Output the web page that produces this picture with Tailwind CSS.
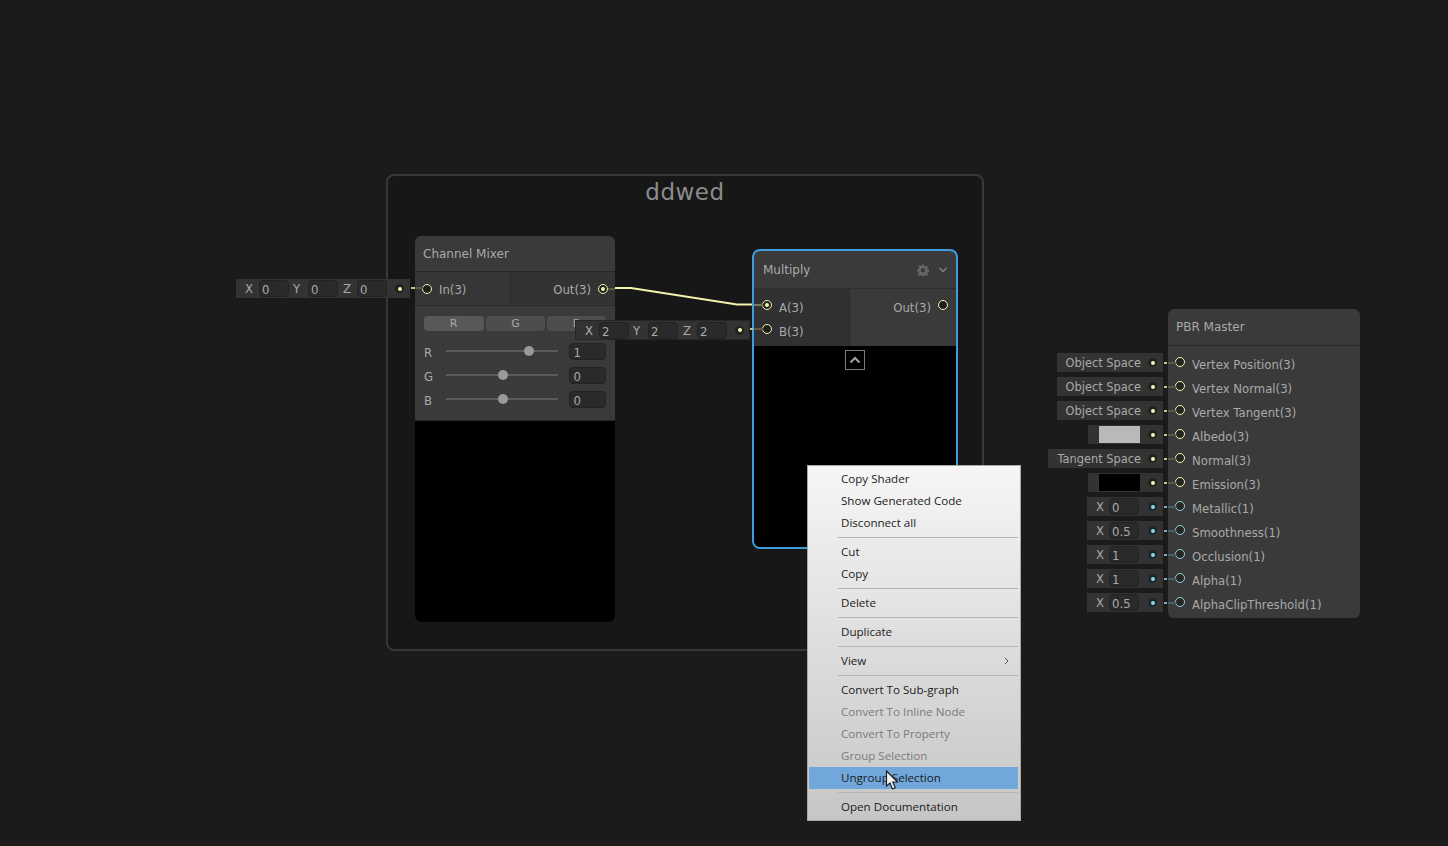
<!DOCTYPE html>
<html lang="en">
<head>
    <meta charset="UTF-8">
    <title>Shader Graph</title>
    <script src="https://cdn.jsdelivr.net/npm/@tailwindcss/browser@4"></script>
</head>
<body class="bg-[#1b1b1b] overflow-hidden">
<div class="relative w-[1448px] h-[846px] overflow-hidden font-['DejaVu_Sans',sans-serif] text-[11.7px] text-[#a9a9a9]">

    <!-- Group -->
    <div class="absolute left-[386px] top-[174px] w-[598px] h-[477px] rounded-lg border-2 border-[#383838] bg-[#171717] text-center text-[23px] leading-[32px] text-[#8c8c8c] tracking-[0.5px]">ddwed</div>

    <!-- Wire -->
    <svg class="absolute left-0 top-0" width="1448" height="846" fill="none">
        <path d="M612 288 H631 L737 304.500 H754" stroke="#f3f3ad" stroke-width="2"/>
    </svg>

    <!-- Channel Mixer -->
    <div class="absolute left-[415px] top-[236px] w-[200px] h-[386px] rounded-md bg-[#3a3a3a] flex flex-col overflow-hidden">
        <div class="h-[36px] shrink-0 flex items-center pl-2 text-[12px] border-b border-[#262626]">Channel Mixer</div>
        <div class="h-[34px] shrink-0 flex border-b border-[#2a2a2a]">
            <div class="w-[96px] flex items-center pl-[7px] gap-[7px] bg-[#363636] border-r border-[#2a2a2a]">
                <span class="w-2.5 h-2.5 rounded-full border-[1.5px] border-[#f3f3b8] bg-[#20201a]"></span>
                <span class="pt-[4px]">In(3)</span>
            </div>
            <div class="relative flex-1 flex items-center justify-end pr-[7px] gap-[7px] bg-[#333333]">
                <span class="pt-[4px]">Out(3)</span>
                <span class="w-2.5 h-2.5 rounded-full border-[1.5px] border-[#f3f3b8] bg-[#20201a] flex items-center justify-center"><span class="w-1 h-1 rounded-full bg-[#f3f3b8]"></span></span>
                <span class="absolute right-0 top-[16px] w-[7px] h-[2px] bg-[#5c5c48]"></span>
            </div>
        </div>
        <div class="h-[115px] shrink-0 pt-[10px] px-[9px] border-b border-[#2a2a2a]">
            <div class="flex gap-[2px] mb-[8px] w-[182px]">
                <div class="flex-1 h-[15px] rounded-sm bg-[#585858] text-center leading-[15px] text-[11px] pr-px">R</div>
                <div class="flex-1 h-[15px] rounded-sm bg-[#4d4d4d] text-center leading-[15px] text-[11px]">G</div>
                <div class="flex-1 h-[15px] rounded-sm bg-[#4d4d4d] text-center leading-[15px] text-[11px]">B</div>
            </div>
            <div class="flex items-center h-6">
                <span class="w-[22px] pt-[5px]">R</span>
                <div class="relative w-[114px] h-[2px] bg-[#5c5c5c]"><span class="absolute left-[78px] -top-[4px] w-2.5 h-2.5 rounded-full bg-[#9a9a9a]"></span></div>
                <div class="ml-[11px] mt-px w-[37px] h-[17px] rounded-sm bg-[#2a2a2a] border border-[#222222] pl-[3px] pt-[2px] leading-[15px]">1</div>
            </div>
            <div class="flex items-center h-6">
                <span class="w-[22px] pt-[5px]">G</span>
                <div class="relative w-[114px] h-[2px] bg-[#5c5c5c]"><span class="absolute left-[52px] -top-[4px] w-2.5 h-2.5 rounded-full bg-[#9a9a9a]"></span></div>
                <div class="ml-[11px] mt-px w-[37px] h-[17px] rounded-sm bg-[#2a2a2a] border border-[#222222] pl-[3px] pt-[2px] leading-[15px]">0</div>
            </div>
            <div class="flex items-center h-6">
                <span class="w-[22px] pt-[5px]">B</span>
                <div class="relative w-[114px] h-[2px] bg-[#5c5c5c]"><span class="absolute left-[52px] -top-[4px] w-2.5 h-2.5 rounded-full bg-[#9a9a9a]"></span></div>
                <div class="ml-[11px] mt-px w-[37px] h-[17px] rounded-sm bg-[#2a2a2a] border border-[#222222] pl-[3px] pt-[2px] leading-[15px]">0</div>
            </div>
        </div>
        <div class="flex-1 bg-black"></div>
    </div>

    <!-- In(3) default value -->
    <div class="absolute left-[236px] top-[279px] w-[174px] h-[19px] bg-[#333333] flex items-center pl-[9px]">
        <span class="w-[14px] pt-[3px]">X</span><span class="w-[30px] h-[17px] rounded-sm bg-[#2a2a2a] border border-[#222222] pl-[2px] pt-[2px] leading-[15px]">0</span>
        <span class="w-[19px] pl-[4px] pt-[3px]">Y</span><span class="w-[30px] h-[17px] rounded-sm bg-[#2a2a2a] border border-[#222222] pl-[2px] pt-[2px] leading-[15px]">0</span>
        <span class="w-[19px] pl-[5px] pt-[3px]">Z</span><span class="w-[30px] h-[17px] rounded-sm bg-[#2a2a2a] border border-[#222222] pl-[2px] pt-[2px] leading-[15px]">0</span>
        <span class="ml-[8px] w-[9px] h-[9px] rounded-full bg-[#22221a] flex items-center justify-center"><span class="w-1 h-1 rounded-full bg-[#f3f3b8]"></span></span>
    </div>
    <div class="absolute left-[411px] top-[287px] w-[4px] h-[2px] bg-[#c4c48c]"></div>
    <div class="absolute left-[416px] top-[287px] w-[7px] h-[2px] bg-[#5c5c48]"></div>

    <!-- Multiply -->
    <div class="absolute left-[752px] top-[249px] w-[206px] h-[300px] rounded-lg border-2 border-[#3d9ddd] bg-[#3a3a3a] flex flex-col overflow-hidden">
        <div class="h-[38px] shrink-0 flex items-center pl-[9px] pr-[9px] text-[12px] border-b border-[#2e2e2e]">
            <span class="flex-1">Multiply</span>
            <svg width="12" height="12" viewBox="0 0 24 24" fill="#666666" class="mr-[9px]"><path fill-rule="evenodd" d="M10 1h4l.7 3.300 2 .8L19.500 3.300l2.800 2.800-1.800 2.800.8 2 3.200.7v4l-3.200.7-.8 2 1.800 2.800-2.800 2.800-2.800-1.800-2 .8-.7 3.200h-4l-.7-3.200-2-.8-2.800 1.800-2.800-2.800 1.800-2.800-.8-2L.5 14.500v-4l3.200-.7.8-2-1.800-2.800 2.800-2.800 2.800 1.800 2-.8zM12 8a4.500 4.500 0 1 0 0 9 4.500 4.500 0 0 0 0-9z"/></svg>
            <svg width="10" height="8" viewBox="0 0 10 8" fill="none" stroke="#808080" stroke-width="1.500" class="mr-[-1px]"><path d="M1.500 2 5 5.500 8.500 2"/></svg>
        </div>
        <div class="h-[57px] shrink-0 flex">
            <div class="w-[96px] bg-[#313131] border-r border-[#2a2a2a] pt-[4px] pl-[8px]">
                <div class="h-6 flex items-center gap-[7px]">
                    <span class="w-2.5 h-2.5 rounded-full border-[1.5px] border-[#f3f3b8] bg-[#20201a] flex items-center justify-center"><span class="w-1 h-1 rounded-full bg-[#f3f3b8]"></span></span>
                    <span class="pt-[7px]">A(3)</span>
                </div>
                <div class="h-6 flex items-center gap-[7px]">
                    <span class="w-2.5 h-2.5 rounded-full border-[1.5px] border-[#f3f3b8] bg-[#20201a]"></span>
                    <span class="pt-[7px]">B(3)</span>
                </div>
            </div>
            <div class="flex-1 pt-[4px] pr-2">
                <div class="h-6 flex items-center justify-end gap-[7px]">
                    <span class="pt-[7px]">Out(3)</span>
                    <span class="w-2.5 h-2.5 rounded-full border-[1.5px] border-[#f3f3b8] bg-[#20201a]"></span>
                </div>
            </div>
        </div>
        <div class="flex-1 bg-black flex justify-center pt-[4px]">
            <div class="w-5 h-5 border border-[#7a7a7a] flex items-center justify-center">
                <svg width="12" height="8" viewBox="0 0 12 8" fill="none" stroke="#a0a0a0" stroke-width="2"><path d="M1.500 6.500 6 2l4.500 4.500"/></svg>
            </div>
        </div>
    </div>

    <!-- B(3) default value, drawn over the mixer -->
    <div class="absolute left-[575px] top-[320px] w-[175px] h-[20px] bg-[#333333] border border-[#262626] flex items-center pl-[9px]">
        <span class="w-[14px] pt-[3px]">X</span><span class="w-[30px] h-[17px] rounded-sm bg-[#2a2a2a] border border-[#222222] pl-[2px] pt-[2px] leading-[15px]">2</span>
        <span class="w-[19px] pl-[4px] pt-[3px]">Y</span><span class="w-[30px] h-[17px] rounded-sm bg-[#2a2a2a] border border-[#222222] pl-[2px] pt-[2px] leading-[15px]">2</span>
        <span class="w-[19px] pl-[5px] pt-[3px]">Z</span><span class="w-[30px] h-[17px] rounded-sm bg-[#2a2a2a] border border-[#222222] pl-[2px] pt-[2px] leading-[15px]">2</span>
        <span class="ml-[8px] w-[9px] h-[9px] rounded-full bg-[#22221a] flex items-center justify-center"><span class="w-1 h-1 rounded-full bg-[#f3f3b8]"></span></span>
    </div>
    <div class="absolute left-[750px] top-[328px] w-[3px] h-[2px] bg-[#c4c48c]"></div>
    <div class="absolute left-[754px] top-[328px] w-[9px] h-[2px] bg-[#5c5c48]"></div>
    <div class="absolute left-[754px] top-[304px] w-[9px] h-[2px] bg-[#77775a]"></div>

    <!-- PBR Master -->
    <div id="pbr" class="absolute left-[1168px] top-[309px] w-[192px] h-[309px] rounded-md bg-[#3a3a3a]">
        <div class="h-[37px] flex items-center pl-2 text-[12px] border-b border-[#2a2a2a]">PBR Master</div>
        <div id="pbrRows" class="pt-[5px]"></div>
    </div>

    <!-- Context menu -->
    <div id="menu" class="absolute left-[807px] top-[465px] w-[214px] h-[356px] pt-[2px] border border-[#a8a8a8] font-['Open_Sans',sans-serif] text-[11.6px] text-[#1c1c1c] bg-gradient-to-b from-[#f6f6f6] to-[#c6c6c6]"></div>

    <!-- Cursor -->
    <svg class="absolute left-[885px] top-[770px]" width="15" height="22" viewBox="0 0 15 22">
        <path d="M1.500 1v15l3.500-3 2.500 6 2.800-1.200-2.500-5.800h4.700z" fill="#f4f4f4" stroke="#202020" stroke-width="1.200"/>
    </svg>
</div>

<script>
    const yellow = { ring: 'border-[#f3f3b8]', dot: 'bg-[#f3f3b8]', dash: 'bg-[#c4c48c]', dim: 'bg-[#5c5c48]', halo: 'bg-[#22221a]' };
    const blue = { ring: 'border-[#8fd6e2]', dot: 'bg-[#8fd6e2]', dash: 'bg-[#7fb0b8]', dim: 'bg-[#47606a]', halo: 'bg-[#18282c]' };

    const textPill = (label, width) => `<div class="h-[19px] flex items-center justify-end pr-[22px] pt-[3px] text-[11.4px] bg-[#333333] ${width}">${label}</div>`;
    const swatch = color => `<div class="h-[19px] w-[75px] flex items-center pl-[11px] bg-[#333333]"><span class="w-[41px] h-[17px] ${color}"></span></div>`;
    const vectorPill = value => `<div class="h-[19px] w-[76px] flex items-center pl-[9px] bg-[#333333]"><span class="w-[13px] pt-[3px]">X</span><span class="w-[30px] h-[17px] rounded-sm bg-[#2a2a2a] border border-[#222222] pl-[2px] pt-[2px] leading-[15px]">${value}</span></div>`;

    const rows = [
        ['Vertex Position(3)', yellow, textPill('Object Space', 'w-[106px]')],
        ['Vertex Normal(3)', yellow, textPill('Object Space', 'w-[106px]')],
        ['Vertex Tangent(3)', yellow, textPill('Object Space', 'w-[106px]')],
        ['Albedo(3)', yellow, swatch('bg-[#b9b9b9]')],
        ['Normal(3)', yellow, textPill('Tangent Space', 'w-[115px]')],
        ['Emission(3)', yellow, swatch('bg-black')],
        ['Metallic(1)', blue, vectorPill('0')],
        ['Smoothness(1)', blue, vectorPill('0.5')],
        ['Occlusion(1)', blue, vectorPill('1')],
        ['Alpha(1)', blue, vectorPill('1')],
        ['AlphaClipThreshold(1)', blue, vectorPill('0.5')],
    ];

    document.getElementById('pbrRows').innerHTML = rows.map(([label, c, pill]) => `
        <div class="relative h-6 flex items-center pl-[7px] gap-[7px]">
            <div class="absolute right-full mr-[5px] top-[2px]">${pill}<span class="absolute right-[6px] top-[5px] w-[9px] h-[9px] rounded-full flex items-center justify-center ${c.halo}"><span class="w-1 h-1 rounded-full ${c.dot}"></span></span></div>
            <span class="absolute -left-[4px] top-[11px] w-[3px] h-[2px] ${c.dash}"></span>
            <span class="absolute left-0 top-[11px] w-2 h-[2px] ${c.dim}"></span>
            <span class="w-2.5 h-2.5 -mt-[2px] rounded-full border-[1.5px] ${c.ring} bg-[#262622]"></span>
            <span class="pt-[5px]">${label}</span>
        </div>`).join('');

    const sep = '<div class="h-[7px] ml-[30px] mr-[2px] flex items-center"><div class="w-full h-px bg-[#b4b4b4]"></div></div>';
    const item = (label, extra = '', arrow = '') => `<div class="h-[22px] mx-px mr-[2px] pl-[32px] pr-[9px] flex items-center justify-between ${extra}"><span>${label}</span>${arrow}</div>`;
    const chevron = '<svg width="5" height="8" viewBox="0 0 5 8" fill="none" stroke="#555555"><path d="M.8.8 4 4 .8 7.200"/></svg>';
    const gray = 'text-[#7b7b7b]';

    document.getElementById('menu').innerHTML = [
        item('Copy Shader'), item('Show Generated Code'), item('Disconnect all'), sep,
        item('Cut'), item('Copy'), sep,
        item('Delete'), sep,
        item('Duplicate'), sep,
        item('View', '', chevron), sep,
        item('Convert To Sub-graph'), item('Convert To Inline Node', gray), item('Convert To Property', gray), item('Group Selection', gray),
        item('Ungroup Selection', 'bg-[#71a7da]'), sep,
        item('Open Documentation'),
    ].join('');
</script>
</body>
</html>
